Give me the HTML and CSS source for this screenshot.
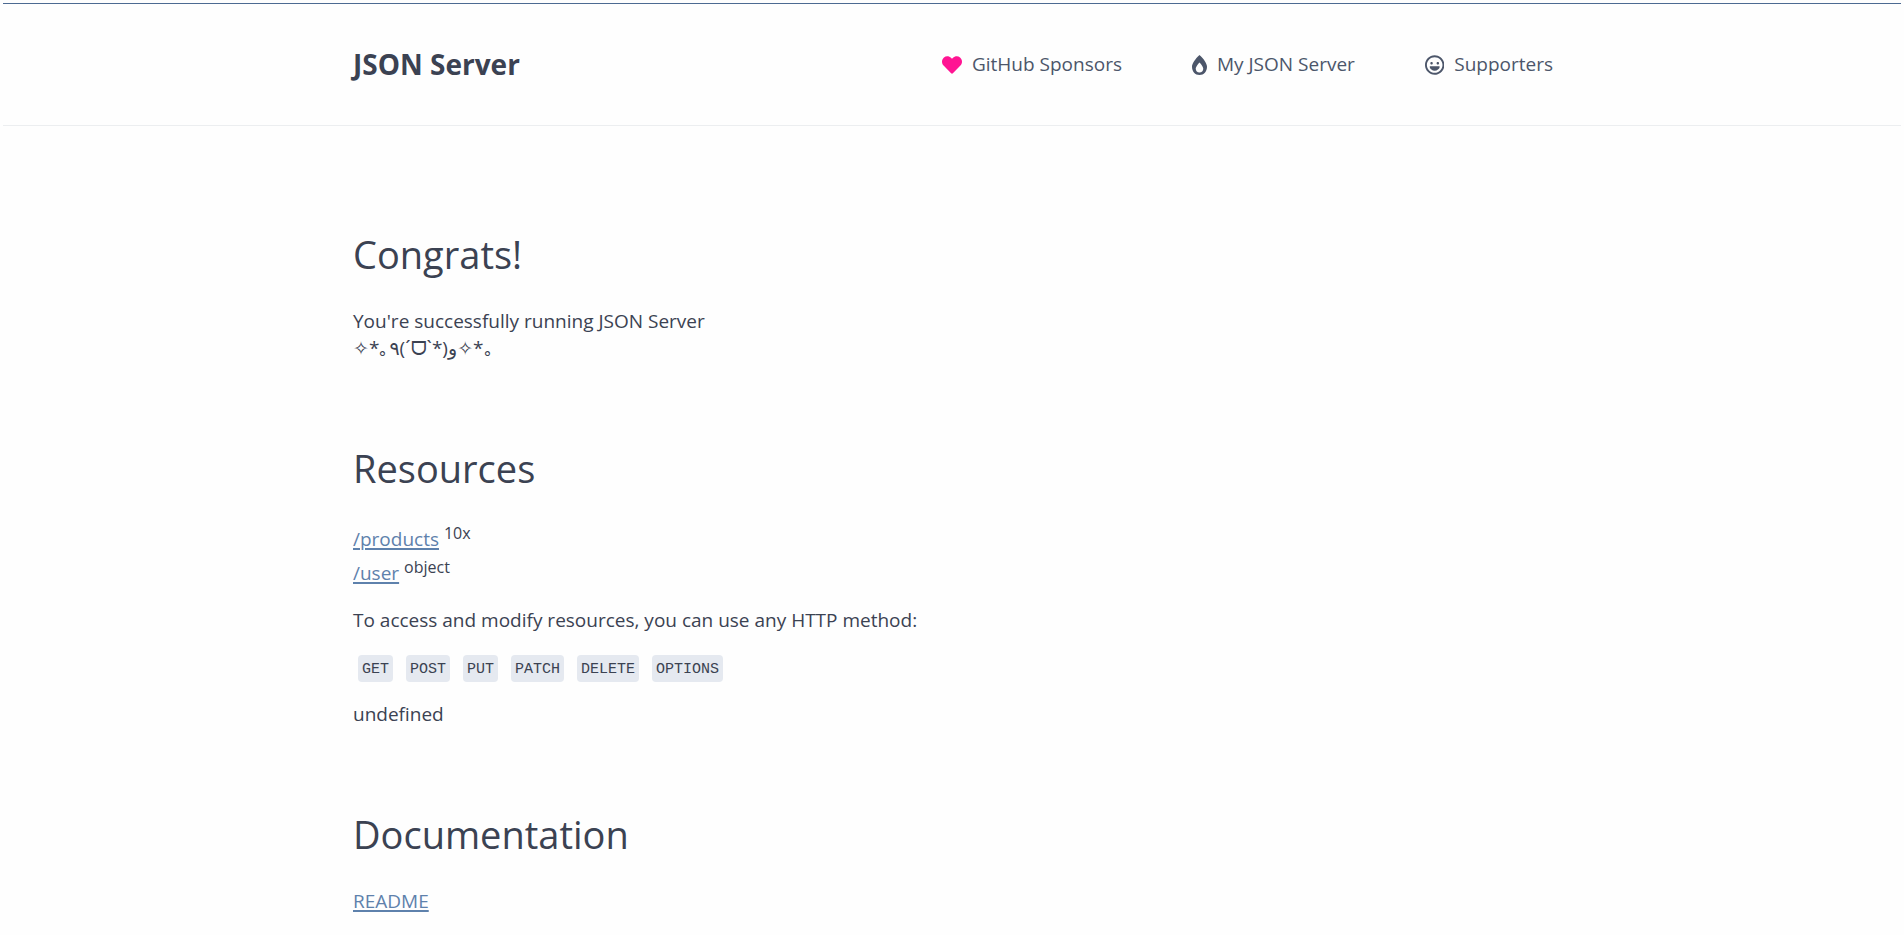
FILE: index.html
```html
<!DOCTYPE html>
<html lang="en">
<head>
<meta charset="utf-8">
<meta name="viewport" content="width=device-width, initial-scale=1">
<title>JSON Server</title>
<link rel="stylesheet" href="styles.css">
</head>
<body>
<header class="header">
  <div class="container nav">
    <strong class="brand">JSON Server</strong>
    <ul class="nav-list">
      <li><a class="nav-link" href="#sponsors"><svg class="icon heart" viewBox="0 0 512 512" aria-hidden="true"><path d="M462.3 62.6C407.500 15.900 326 24.300 275.700 76.200L256 96.500l-19.700-20.300C186.100 24.300 104.500 15.900 49.700 62.600c-62.800 53.600-66.100 149.800-9.900 207.900l193.500 199.800c12.500 12.900 32.800 12.900 45.300 0l193.500-199.800c56.300-58.100 53-154.300-9.800-207.900z"/></svg>GitHub Sponsors</a></li>
      <li><a class="nav-link" href="#my-json-server"><svg class="icon drop" viewBox="0 0 384 512" aria-hidden="true"><path d="M192 0C79.700 101.300 0 220.900 0 300.500 0 425 79 512 192 512s192-87 192-211.500C384 220.500 303.800 100.900 192 0zM192 448c-56.500 0-96-39-96-94.800 0-13.500 4.600-61.500 96-161.200 91.500 99.700 96 147.700 96 161.200 0 55.800-39.500 94.800-96 94.800z"/></svg>My JSON Server</a></li>
      <li><a class="nav-link" href="#supporters"><svg class="icon smile" viewBox="0 0 496 512" aria-hidden="true"><path d="M248 8C111 8 0 119 0 256s111 248 248 248 248-111 248-248S385 8 248 8zm0 448c-110.300 0-200-89.700-200-200S137.700 56 248 56s200 89.700 200 200-89.700 200-200 200zm-80-216c17.700 0 32-14.300 32-32s-14.300-32-32-32-32 14.300-32 32 14.300 32 32 32zm160 0c17.700 0 32-14.300 32-32s-14.300-32-32-32-32 14.300-32 32 14.300 32 32 32zm33.800 48H134.200c-9.600 0-16.600 8.700-15 18 9.600 53.700 65 94 128.800 94s119.200-40.300 128.800-94c1.600-9.300-5.400-18-15-18z"/></svg>Supporters</a></li>
    </ul>
  </div>
</header>
<main class="container content">
  <section class="section">
    <h1 class="heading">Congrats!</h1>
    <p class="text">You're successfully running JSON Server<br>✧*｡٩(ˊᗜˋ*)و✧*｡</p>
  </section>
  <section class="section">
    <h1 class="heading">Resources</h1>
    <ul class="resources">
      <li><a class="link" href="#products">/products</a> <sup class="count">10x</sup></li>
      <li><a class="link" href="#user">/user</a> <sup class="count">object</sup></li>
    </ul>
    <p class="text">To access and modify resources, you can use any HTTP method:</p>
    <p class="methods"><code>GET</code><code>POST</code><code>PUT</code><code>PATCH</code><code>DELETE</code><code>OPTIONS</code></p>
    <p class="text">undefined</p>
  </section>
  <section class="section">
    <h1 class="heading">Documentation</h1>
    <p class="text"><a class="link" href="#readme">README</a></p>
  </section>
</main>
</body>
</html>
```
FILE: styles.css
```css
* {
  box-sizing: border-box;
}

html {
  background: #fefefe;
}

body {
  margin: 3px 3px 0;
  border-top: 1px solid #4c6a92;
  color: #3b4252;
  font: 19px/27px "Open Sans", "Noto Sans", "DejaVu Sans", sans-serif;
}

.container {
  max-width: 1202px;
  margin: 0 auto;
  padding-left: 2px;
}

.header {
  border-bottom: 1px solid #eceef0;
}

.nav {
  display: flex;
  align-items: center;
  justify-content: space-between;
  height: 121px;
}

.brand {
  font-size: 28px;
}

.nav-list,
.resources {
  margin: 0;
  padding: 0;
  list-style: none;
}

.nav-list {
  display: flex;
  gap: 70px;
}

.nav-link {
  display: flex;
  align-items: center;
  gap: 10px;
  color: #4c566a;
  text-decoration: none;
}

.icon {
  height: 20px;
  fill: currentColor;
}

.heart {
  fill: #ff1493;
}

.content {
  padding-top: 96px;
}

.section {
  margin-bottom: 74px;
}

.section:last-child,
.section:last-child .text {
  margin-bottom: 0;
}

.heading {
  margin: 0 0 22px;
  font-size: 38px;
  font-weight: 400;
  line-height: 64px;
}

.text {
  margin: 0 0 20px;
}

.resources {
  margin-bottom: 17px;
}

.resources li {
  line-height: 34px;
}

.link {
  color: #5e81ac;
  text-decoration-thickness: 2px;
  text-underline-offset: 2px;
}

.count {
  font-size: 16px;
  line-height: 0;
}

.methods {
  display: flex;
  gap: 13px;
  margin: 21px 0 19px;
  padding-left: 5px;
}

.methods code {
  padding: 2px 4px 0;
  border-radius: 4px;
  background: #e5e9f0;
  font-family: "Liberation Mono", monospace;
  font-size: 15px;
  line-height: 25px;
}
```
